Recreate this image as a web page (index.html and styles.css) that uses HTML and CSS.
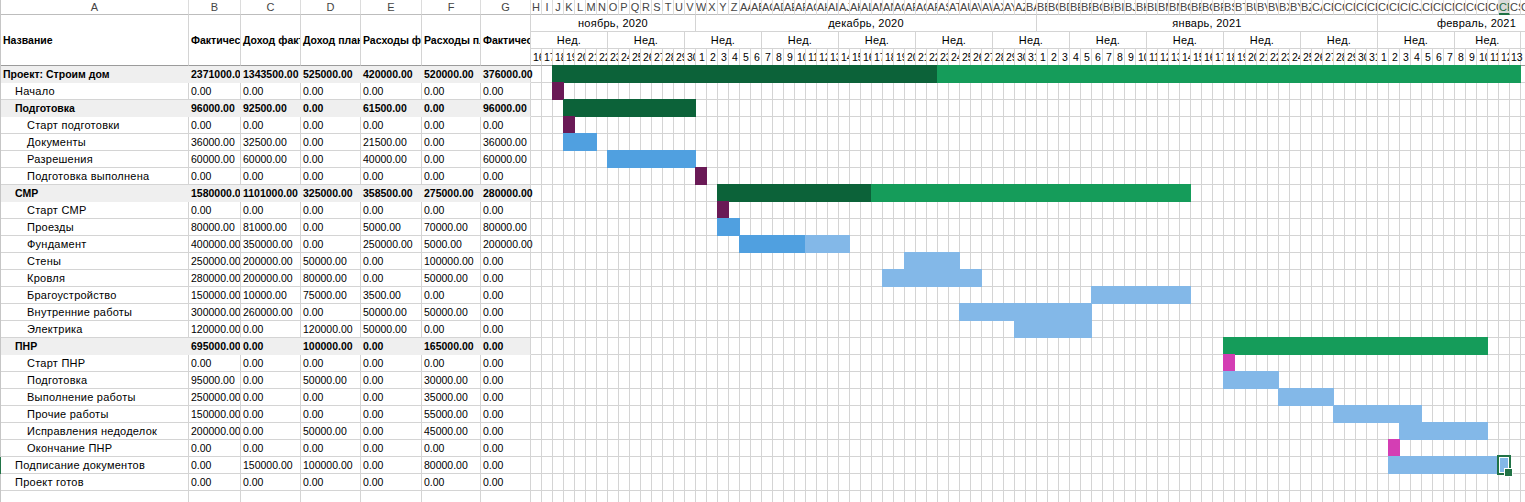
FILE: index.html
```html
<!DOCTYPE html>
<html lang="ru">
<head>
<meta charset="utf-8">
<title>Гант</title>
<link rel="stylesheet" href="styles.css">
</head>
<body>
<div class="sheet">
  <div class="hl">
    <div class="hc ca">A</div><div class="hc cb">B</div><div class="hc cc">C</div><div class="hc cd">D</div><div class="hc ce">E</div><div class="hc cf">F</div><div class="hc cg">G</div>
    <div class="hg"><span>H</span><span>I</span><span>J</span><span>K</span><span>L</span><span>M</span><span>N</span><span>O</span><span>P</span><span>Q</span><span>R</span><span>S</span><span>T</span><span>U</span><span>V</span><span>W</span><span>X</span><span>Y</span><span>Z</span><span>AA</span><span>AB</span><span>AC</span><span>AD</span><span>AE</span><span>AF</span><span>AG</span><span>AH</span><span>AI</span><span>AJ</span><span>AK</span><span>AL</span><span>AM</span><span>AN</span><span>AO</span><span>AP</span><span>AQ</span><span>AR</span><span>AS</span><span>AT</span><span>AU</span><span>AV</span><span>AW</span><span>AX</span><span>AY</span><span>AZ</span><span>BA</span><span>BB</span><span>BC</span><span>BD</span><span>BE</span><span>BF</span><span>BG</span><span>BH</span><span>BI</span><span>BJ</span><span>BK</span><span>BL</span><span>BM</span><span>BN</span><span>BO</span><span>BP</span><span>BQ</span><span>BR</span><span>BS</span><span>BT</span><span>BU</span><span>BV</span><span>BW</span><span>BX</span><span>BY</span><span>BZ</span><span>CA</span><span>CB</span><span>CC</span><span>CD</span><span>CE</span><span>CF</span><span>CG</span><span>CH</span><span>CI</span><span>CJ</span><span>CK</span><span>CL</span><span>CM</span><span>CN</span><span>CO</span><span>CP</span><span>CQ</span><span class="on">CR</span><span>CS</span><span>CT</span></div>
  </div>

  <div class="h2">
    <div class="tc ca">Название</div><div class="tc cb">Фактическая стоимость</div><div class="tc cc">Доход факт</div><div class="tc cd">Доход план</div><div class="tc ce">Расходы факт</div><div class="tc cf">Расходы план</div><div class="tc cg">Фактические затраты</div>
    <div class="gh">
      <div class="mon"><span class="m15">ноябрь, 2020</span><span class="m31">декабрь, 2020</span><span class="m31">январь, 2021</span><span class="m18">февраль, 2021</span></div>
      <div class="wk"><span class="w7">Нед.</span><span class="w7">Нед.</span><span class="w7">Нед.</span><span class="w7">Нед.</span><span class="w7">Нед.</span><span class="w7">Нед.</span><span class="w7">Нед.</span><span class="w7">Нед.</span><span class="w7">Нед.</span><span class="w7">Нед.</span><span class="w7">Нед.</span><span class="w7">Нед.</span><span class="w6">Нед.</span><span class="w7"></span></div>
      <div class="dy"><span>16</span><span>17</span><span>18</span><span>19</span><span>20</span><span>21</span><span>22</span><span>23</span><span>24</span><span>25</span><span>26</span><span>27</span><span>28</span><span>29</span><span>30</span><span>1</span><span>2</span><span>3</span><span>4</span><span>5</span><span>6</span><span>7</span><span>8</span><span>9</span><span>10</span><span>11</span><span>12</span><span>13</span><span>14</span><span>15</span><span>16</span><span>17</span><span>18</span><span>19</span><span>20</span><span>21</span><span>22</span><span>23</span><span>24</span><span>25</span><span>26</span><span>27</span><span>28</span><span>29</span><span>30</span><span>31</span><span>1</span><span>2</span><span>3</span><span>4</span><span>5</span><span>6</span><span>7</span><span>8</span><span>9</span><span>10</span><span>11</span><span>12</span><span>13</span><span>14</span><span>15</span><span>16</span><span>17</span><span>18</span><span>19</span><span>20</span><span>21</span><span>22</span><span>23</span><span>24</span><span>25</span><span>26</span><span>27</span><span>28</span><span>29</span><span>30</span><span>31</span><span>1</span><span>2</span><span>3</span><span>4</span><span>5</span><span>6</span><span>7</span><span>8</span><span>9</span><span>10</span><span>11</span><span>12</span><span class="last">13</span><span></span></div>
    </div>
  </div>

  <div class="row grp l0"><div class="c ca">Проект: Строим дом</div><div class="c cb">2371000.00</div><div class="c cc">1343500.00</div><div class="c cd">525000.00</div><div class="c ce">420000.00</div><div class="c cf">520000.00</div><div class="c cg">376000.00</div>
    <div class="gt"><b class="bar dg" style="grid-column:3/span 35"></b><b class="bar lg" style="grid-column:38/span 53"></b></div></div>
  <div class="row l1"><div class="c ca">Начало</div><div class="c cb">0.00</div><div class="c cc">0.00</div><div class="c cd">0.00</div><div class="c ce">0.00</div><div class="c cf">0.00</div><div class="c cg">0.00</div>
    <div class="gt"><b class="bar pu" style="grid-column:3/span 1"></b></div></div>
  <div class="row grp l1"><div class="c ca">Подготовка</div><div class="c cb">96000.00</div><div class="c cc">92500.00</div><div class="c cd">0.00</div><div class="c ce">61500.00</div><div class="c cf">0.00</div><div class="c cg">96000.00</div>
    <div class="gt"><b class="bar dg" style="grid-column:4/span 12"></b></div></div>
  <div class="row l2"><div class="c ca">Старт подготовки</div><div class="c cb">0.00</div><div class="c cc">0.00</div><div class="c cd">0.00</div><div class="c ce">0.00</div><div class="c cf">0.00</div><div class="c cg">0.00</div>
    <div class="gt"><b class="bar pu" style="grid-column:4/span 1"></b></div></div>
  <div class="row l2"><div class="c ca">Документы</div><div class="c cb">36000.00</div><div class="c cc">32500.00</div><div class="c cd">0.00</div><div class="c ce">21500.00</div><div class="c cf">0.00</div><div class="c cg">36000.00</div>
    <div class="gt"><b class="bar bl" style="grid-column:4/span 3"></b></div></div>
  <div class="row l2"><div class="c ca">Разрешения</div><div class="c cb">60000.00</div><div class="c cc">60000.00</div><div class="c cd">0.00</div><div class="c ce">40000.00</div><div class="c cf">0.00</div><div class="c cg">60000.00</div>
    <div class="gt"><b class="bar bl" style="grid-column:8/span 8"></b></div></div>
  <div class="row l2"><div class="c ca">Подготовка выполнена</div><div class="c cb">0.00</div><div class="c cc">0.00</div><div class="c cd">0.00</div><div class="c ce">0.00</div><div class="c cf">0.00</div><div class="c cg">0.00</div>
    <div class="gt"><b class="bar pu" style="grid-column:16/span 1"></b></div></div>
  <div class="row grp l1"><div class="c ca">СМР</div><div class="c cb">1580000.00</div><div class="c cc">1101000.00</div><div class="c cd">325000.00</div><div class="c ce">358500.00</div><div class="c cf">275000.00</div><div class="c cg">280000.00</div>
    <div class="gt"><b class="bar dg" style="grid-column:18/span 14"></b><b class="bar lg" style="grid-column:32/span 29"></b></div></div>
  <div class="row l2"><div class="c ca">Старт СМР</div><div class="c cb">0.00</div><div class="c cc">0.00</div><div class="c cd">0.00</div><div class="c ce">0.00</div><div class="c cf">0.00</div><div class="c cg">0.00</div>
    <div class="gt"><b class="bar pu" style="grid-column:18/span 1"></b></div></div>
  <div class="row l2"><div class="c ca">Проезды</div><div class="c cb">80000.00</div><div class="c cc">81000.00</div><div class="c cd">0.00</div><div class="c ce">5000.00</div><div class="c cf">70000.00</div><div class="c cg">80000.00</div>
    <div class="gt"><b class="bar bl" style="grid-column:18/span 2"></b></div></div>
  <div class="row l2"><div class="c ca">Фундамент</div><div class="c cb">400000.00</div><div class="c cc">350000.00</div><div class="c cd">0.00</div><div class="c ce">250000.00</div><div class="c cf">5000.00</div><div class="c cg">200000.00</div>
    <div class="gt"><b class="bar bl" style="grid-column:20/span 6"></b><b class="bar lb" style="grid-column:26/span 4"></b></div></div>
  <div class="row l2"><div class="c ca">Стены</div><div class="c cb">250000.00</div><div class="c cc">200000.00</div><div class="c cd">50000.00</div><div class="c ce">0.00</div><div class="c cf">100000.00</div><div class="c cg">0.00</div>
    <div class="gt"><b class="bar lb" style="grid-column:35/span 5"></b></div></div>
  <div class="row l2"><div class="c ca">Кровля</div><div class="c cb">280000.00</div><div class="c cc">200000.00</div><div class="c cd">80000.00</div><div class="c ce">0.00</div><div class="c cf">50000.00</div><div class="c cg">0.00</div>
    <div class="gt"><b class="bar lb" style="grid-column:33/span 9"></b></div></div>
  <div class="row l2"><div class="c ca">Брагоустройство</div><div class="c cb">150000.00</div><div class="c cc">10000.00</div><div class="c cd">75000.00</div><div class="c ce">3500.00</div><div class="c cf">0.00</div><div class="c cg">0.00</div>
    <div class="gt"><b class="bar lb" style="grid-column:52/span 9"></b></div></div>
  <div class="row l2"><div class="c ca">Внутренние работы</div><div class="c cb">300000.00</div><div class="c cc">260000.00</div><div class="c cd">0.00</div><div class="c ce">50000.00</div><div class="c cf">50000.00</div><div class="c cg">0.00</div>
    <div class="gt"><b class="bar lb" style="grid-column:40/span 12"></b></div></div>
  <div class="row l2"><div class="c ca">Электрика</div><div class="c cb">120000.00</div><div class="c cc">0.00</div><div class="c cd">120000.00</div><div class="c ce">50000.00</div><div class="c cf">0.00</div><div class="c cg">0.00</div>
    <div class="gt"><b class="bar lb" style="grid-column:45/span 7"></b></div></div>
  <div class="row grp l1"><div class="c ca">ПНР</div><div class="c cb">695000.00</div><div class="c cc">0.00</div><div class="c cd">100000.00</div><div class="c ce">0.00</div><div class="c cf">165000.00</div><div class="c cg">0.00</div>
    <div class="gt"><b class="bar lg" style="grid-column:64/span 24"></b></div></div>
  <div class="row l2"><div class="c ca">Старт ПНР</div><div class="c cb">0.00</div><div class="c cc">0.00</div><div class="c cd">0.00</div><div class="c ce">0.00</div><div class="c cf">0.00</div><div class="c cg">0.00</div>
    <div class="gt"><b class="bar pk" style="grid-column:64/span 1"></b></div></div>
  <div class="row l2"><div class="c ca">Подготовка</div><div class="c cb">95000.00</div><div class="c cc">0.00</div><div class="c cd">50000.00</div><div class="c ce">0.00</div><div class="c cf">30000.00</div><div class="c cg">0.00</div>
    <div class="gt"><b class="bar lb" style="grid-column:64/span 5"></b></div></div>
  <div class="row l2"><div class="c ca">Выполнение работы</div><div class="c cb">250000.00</div><div class="c cc">0.00</div><div class="c cd">0.00</div><div class="c ce">0.00</div><div class="c cf">35000.00</div><div class="c cg">0.00</div>
    <div class="gt"><b class="bar lb" style="grid-column:69/span 5"></b></div></div>
  <div class="row l2"><div class="c ca">Прочие работы</div><div class="c cb">150000.00</div><div class="c cc">0.00</div><div class="c cd">0.00</div><div class="c ce">0.00</div><div class="c cf">55000.00</div><div class="c cg">0.00</div>
    <div class="gt"><b class="bar lb" style="grid-column:74/span 8"></b></div></div>
  <div class="row l2"><div class="c ca">Исправления недоделок</div><div class="c cb">200000.00</div><div class="c cc">0.00</div><div class="c cd">50000.00</div><div class="c ce">0.00</div><div class="c cf">45000.00</div><div class="c cg">0.00</div>
    <div class="gt"><b class="bar lb" style="grid-column:80/span 8"></b></div></div>
  <div class="row l2"><div class="c ca">Окончание ПНР</div><div class="c cb">0.00</div><div class="c cc">0.00</div><div class="c cd">0.00</div><div class="c ce">0.00</div><div class="c cf">0.00</div><div class="c cg">0.00</div>
    <div class="gt"><b class="bar pk" style="grid-column:79/span 1"></b></div></div>
  <div class="row l1 selrow"><div class="c ca">Подписание документов</div><div class="c cb">0.00</div><div class="c cc">150000.00</div><div class="c cd">100000.00</div><div class="c ce">0.00</div><div class="c cf">80000.00</div><div class="c cg">0.00</div>
    <div class="gt pos"><b class="bar lb" style="grid-column:79/span 11"></b><i class="selbox"></i></div></div>
  <div class="row l1"><div class="c ca">Проект готов</div><div class="c cb">0.00</div><div class="c cc">0.00</div><div class="c cd">0.00</div><div class="c ce">0.00</div><div class="c cf">0.00</div><div class="c cg">0.00</div>
    <div class="gt"></div></div>
  <div class="row"><div class="c ca"></div><div class="c cb"></div><div class="c cc"></div><div class="c cd"></div><div class="c ce"></div><div class="c cf"></div><div class="c cg"></div>
    <div class="gt"></div></div>
</div>
</body>
</html>
```

FILE: styles.css
```css
* { box-sizing: border-box; }
html, body { margin: 0; padding: 0; background: #fff; }
body {
  font-family: "Liberation Sans", Arial, sans-serif;
  font-size: 10.5px;
  color: #000;
}
.sheet {
  width: 1525px;
  height: 502px;
  overflow: hidden;
  background: #fff;
}

/* column widths */
.ca { width: 188px; }
.cb { width: 52px; }
.cc { width: 60px; }
.cd { width: 60px; }
.ce { width: 61px; }
.cf { width: 59px; }
.cg { width: 50px; }

.hl, .h2, .row {
  display: flex;
  border-left: 1px solid #c6c6c6;
}

/* column letters */
.hl { height: 15px; font-size: 11px; color: #444; }
.hc, .hg span {
  flex: none;
  height: 15px;
  line-height: 14px;
  text-align: center;
  border-right: 1px solid #dcdcdc;
  border-bottom: 1px solid #bdbdbd;
  overflow: hidden;
  white-space: nowrap;
}
.hg { display: flex; flex: none; }
.hg span { width: 11px; }
.hg .on {
  background: #dadada;
  color: #1d6b40;
  border-bottom: 2px solid #217346;
}

/* title row */
.h2 { height: 51px; }
.tc {
  flex: none;
  height: 51px;
  line-height: 50px;
  padding-left: 2px;
  font-weight: bold;
  border-right: 1px solid #d4d4d4;
  border-bottom: 1px solid #9b9b9b;
  overflow: hidden;
  white-space: nowrap;
}
.gh { flex: none; width: 1001px; display: flex; flex-direction: column; }
.mon, .wk, .dy { display: flex; height: 17px; }
.mon span, .wk span, .dy span {
  flex: none;
  height: 17px;
  line-height: 16px;
  text-align: center;
  white-space: nowrap;
  overflow: hidden;
  border-right: 1px solid #d4d4d4;
  border-bottom: 1px solid #d4d4d4;
}
.mon span, .wk span { font-size: 11px; letter-spacing: 0.25px; }
.dy span { width: 11px; padding-left: 2px; border-bottom-color: #9b9b9b; }
.dy .last { overflow: visible; padding-left: 1px; }
.m15 { width: 165px; }
.m31 { width: 341px; }
.m18 { width: 198px; }
.w7 { width: 77px; }
.w6 { width: 66px; }

/* data rows */
.row { height: 17px; }
.c {
  flex: none;
  height: 17px;
  line-height: 16px;
  padding-left: 2px;
  border-right: 1px solid #d4d4d4;
  border-bottom: 1px solid #d4d4d4;
  white-space: nowrap;
  overflow: hidden;
}
.c.ca { font-size: 11px; letter-spacing: 0.25px; }
.c.cg { overflow: visible; }
.l1 .ca { padding-left: 14px; }
.l2 .ca { padding-left: 26px; }
.grp .c {
  background: #efefef;
  border-color: #efefef;
  font-weight: bold;
}
.grp .c.ca { font-size: 10.5px; letter-spacing: 0; }
.grp .c.cg { border-right-color: #d4d4d4; }
.selrow { border-left: 1px solid #217346; }

.gt {
  flex: none;
  width: 1001px;
  height: 17px;
  display: grid;
  grid-template-columns: repeat(91, 11px);
  grid-template-rows: 17px;
  background-image:
    linear-gradient(to right, transparent 10px, #d4d4d4 10px),
    linear-gradient(to bottom, transparent 16px, #d4d4d4 16px);
  background-size: 11px 17px, 11px 17px;
}
.bar { grid-row: 1; margin: -1px 0 0 -1px; }
.dg { background: #0c6239; }
.lg { background: #159c5a; }
.pu { background: #6a1a56; }
.pk { background: #d43eb4; }
.bl { background: #50a0e0; }
.lb { background: #83b8e8; }

.pos { position: relative; }
.selbox {
  position: absolute;
  left: 966px;
  top: -2px;
  width: 14px;
  height: 20px;
  border: 2px solid #217346;
  box-shadow: inset 0 0 0 1px #fff;
}
.selbox::after {
  content: "";
  position: absolute;
  right: -4px;
  bottom: -4px;
  width: 7px;
  height: 7px;
  background: #217346;
  border: 1px solid #fff;
}
```
